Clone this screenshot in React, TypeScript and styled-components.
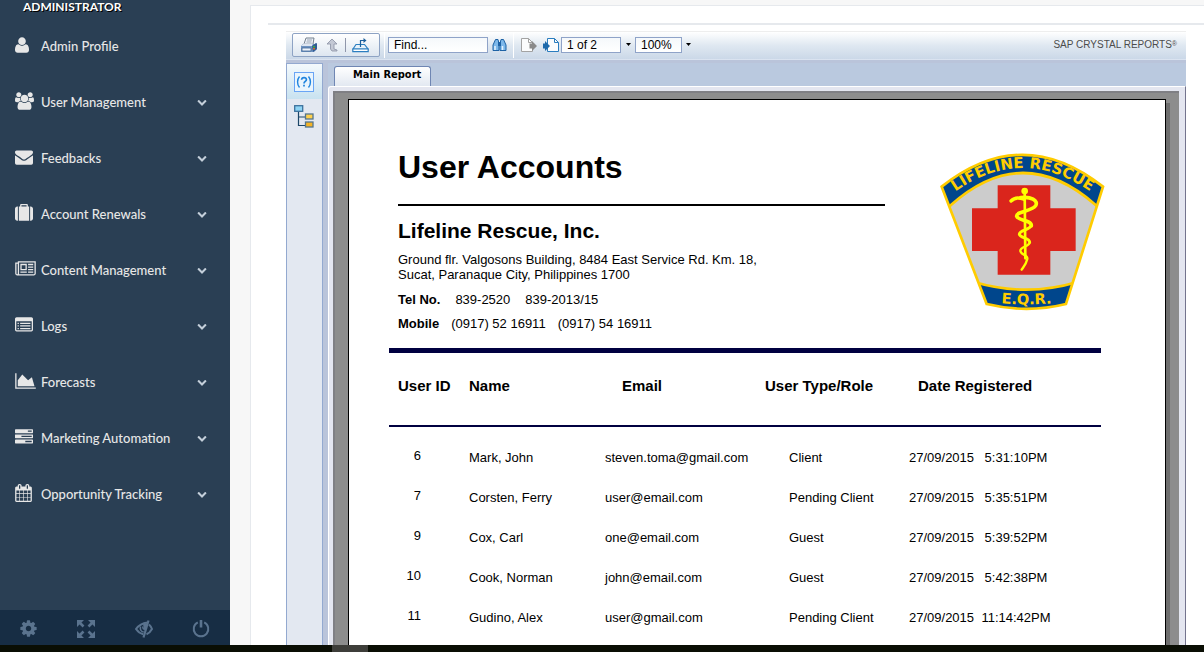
import React from "react";
import styled, { createGlobalStyle, css } from "styled-components";

const Global = createGlobalStyle`
  *, *::before, *::after { box-sizing: border-box; }
  html, body { margin: 0; padding: 0; overflow: hidden; background: #f7f7f7; }
  button, input { font: inherit; margin: 0; }
`;

const arial = `"Liberation Sans", Arial, sans-serif`;
const navy = "#000040";

/* ---------- shell ---------- */

const Shell = styled.div`
  display: flex;
  flex-direction: column;
  height: 100vh;
  overflow: hidden;
`;

const Body = styled.div`
  flex: 1;
  min-height: 0;
  display: flex;
`;

const ScrollTrack = styled.div`
  height: 7px;
  background: #0a0e04;
  padding-left: 332px;
`;

const ScrollThumb = styled.div`
  width: 36px;
  height: 7px;
  background: #3e3e3a;
`;

/* ---------- sidebar ---------- */

const Sidebar = styled.aside`
  flex: 0 0 230px;
  display: flex;
  flex-direction: column;
  background: #2a3f54;
  font-family: Lato, sans-serif;
`;

const Role = styled.h3`
  margin: 0;
  padding-left: 23px;
  height: 18px;
  font-size: 12px;
  line-height: 14px;
  font-weight: 700;
  color: #fff;
  text-shadow: 1px 1px #000;
`;

const Menu = styled.ul`
  flex: 1;
  margin: 0;
  padding: 0;
  list-style: none;
`;

const MenuLink = styled.a`
  display: flex;
  align-items: center;
  height: 56px;
  padding: 0 23px 0 15px;
  color: #e7e7e7;
  font-size: 13px;
  line-height: 20px;
  font-weight: 500;
  text-decoration: none;
`;

const MenuIcon = styled.span`
  flex: 0 0 26px;
  height: 20px;
  svg { display: block; overflow: visible; }
`;

const MenuLabel = styled.span`
  flex: 1;
  white-space: nowrap;
`;

const MenuArrow = styled.span`
  display: flex;
  color: #c4cfda;
`;

const SidebarFooter = styled.div`
  display: grid;
  grid-template-columns: repeat(4, 1fr);
  height: 35px;
  background: #172d44;
`;

const FooterButton = styled.button`
  display: flex;
  align-items: center;
  justify-content: center;
  padding: 2px 0 0;
  border: 0;
  background: none;
  color: #5a738e;
`;

/* ---------- content panel ---------- */

const Content = styled.main`
  flex: 1;
  min-width: 0;
  display: flex;
  padding: 5px 0 0 20px;
  background: #f7f7f7;
`;

const Panel = styled.section`
  flex: 1;
  min-width: 0;
  display: flex;
  flex-direction: column;
  padding: 17px 0 0 17px;
  border: 1px solid #e6e9ed;
  border-width: 1px 0 0 1px;
  background: #fff;
`;

const Divider = styled.hr`
  flex: none;
  width: 100%;
  height: 2px;
  margin: 0 0 6px;
  border: 0;
  background: #e6e9ed;
`;

const Viewer = styled.div`
  flex: 1;
  min-height: 0;
  display: flex;
  flex-direction: column;
  margin: 0 18px;
  background: #bac9df;
  font-family: ${arial};
  color: #000;
`;

const Toolbar = styled.div`
  flex: none;
  display: flex;
  align-items: center;
  height: 29px;
  padding: 0 9px 2px 6px;
  border-top: 1px solid #eee;
  border-bottom: 1px solid #dae3f0;
  background: linear-gradient(#fff, #dfe8f1 50%, #cbd8e8);
`;

const ToolGroup = styled.div`
  display: flex;
  align-items: center;
  width: 88px;
  height: 24px;
  margin-right: 1px;
  padding-left: 6px;
  border: 1px solid #8ea3c4;
  border-radius: 2px;
  background: linear-gradient(#fff, #dde6f0);
`;

const IconButton = styled.button<{ $w?: number }>`
  flex: none;
  display: flex;
  align-items: center;
  justify-content: center;
  width: ${(p) => p.$w ?? 20}px;
  height: 20px;
  padding: 0;
  border: 0;
  background: none;
  svg { display: block; flex: none; }
`;

const Rule = styled.span<{ $dark?: boolean }>`
  flex: none;
  width: 1px;
  height: ${(p) => (p.$dark ? 14 : 26)}px;
  margin: 0 ${(p) => (p.$dark ? 0 : 3)}px;
  background: ${(p) => (p.$dark ? "#8f96aa" : "#fff")};
`;

const Field = styled.input<{ $w: number }>`
  width: ${(p) => p.$w}px;
  height: 16px;
  padding: 0 5px;
  border: 1px solid #8fa3c8;
  border-radius: 0;
  background: linear-gradient(#f5f8fb, #fff);
  font-family: ${arial};
  font-size: 12px;
  line-height: 14px;
  color: #000;
  outline: none;
  &::placeholder { color: #000; opacity: 1; }
`;

const Brand = styled.span`
  margin-left: auto;
  font-size: 10px;
  line-height: 14px;
  color: #4c4c4c;
  white-space: nowrap;
  sup { font-size: 7px; line-height: 7px; vertical-align: 2px; }
`;

const ViewerBody = styled.div`
  flex: 1;
  min-height: 0;
  display: flex;
  border-top: 3px solid #bac4da;
`;

const ToolPanel = styled.nav`
  flex: 0 0 37px;
  display: flex;
  flex-direction: column;
  border: 1px solid #93a9d0;
  border-bottom: 0;
  background: #e3e8f1;
`;

const PanelButton = styled.button<{ $active?: boolean }>`
  display: flex;
  align-items: center;
  justify-content: center;
  height: 35px;
  padding: 0 2px 0 0;
  border: 0;
  background: ${(p) => (p.$active ? "linear-gradient(#f4f9fc, #c8e2f0)" : "none")};
`;

const ReportColumn = styled.div`
  flex: 1;
  min-width: 0;
  display: flex;
  flex-direction: column;
  padding-left: 5px;
  background: linear-gradient(90deg, #bac4da 5px, transparent 5px);
`;

const TabStrip = styled.div`
  flex: none;
  display: flex;
  height: 23px;
  padding: 3px 0 0 6px;
`;

const Tab = styled.button`
  width: 97px;
  height: 20px;
  padding: 0 8px 3px 18px;
  border: 1px solid #6f86b3;
  border-bottom: 0;
  border-radius: 3px 3px 0 0;
  background: linear-gradient(#fff, #e2e8f1);
  font-family: "DejaVu Sans Condensed", "DejaVu Sans", sans-serif;
  font-size: 11px;
  line-height: 14px;
  font-weight: 700;
  text-align: left;
  white-space: nowrap;
`;

const Frame = styled.div`
  flex: 1;
  min-height: 0;
  display: flex;
  padding: 4px 6px 0 4px;
  border: 1px solid #fff;
  border-right-color: #74748e;
  border-bottom: 0;
  border-radius: 3px 0 0 0;
  background: #e4e6f0;
`;

const Desk = styled.div`
  flex: 1;
  min-width: 0;
  padding: 6px 13px 0;
  border: 2px solid #7f7f84;
  border-width: 2px 0 0 2px;
  background: #8d8d8d;
`;

const Paper = styled.article`
  height: 100%;
  padding: 48px 40px 0;
  border: 1px solid #000;
  border-bottom: 0;
  background: #fff;
  box-shadow: 4px 4px 0 #6e6e6e;
`;

/* ---------- report ---------- */

const ReportHead = styled.header`
  display: flex;
  justify-content: space-between;
  max-width: 716px;
  height: 200px;
  padding-left: 9px;
`;

const Letterhead = styled.div`
  flex: 0 1 487px;
`;

const Title = styled.h1`
  margin: 0 0 16px;
  padding-bottom: 18px;
  border-bottom: 2px solid #000;
  font-size: 32px;
  line-height: 38px;
  font-weight: 700;
`;

const Company = styled.h2`
  margin: -4px 0 8px;
  font-size: 21px;
  line-height: 26px;
  font-weight: 700;
`;

const Address = styled.address`
  margin-bottom: 10px;
  font-size: 13px;
  line-height: 15px;
  font-style: normal;
`;

const Contact = styled.p<{ $gap: number }>`
  display: flex;
  margin: 0 0 8px;
  font-size: 13px;
  line-height: 16px;
  gap: ${(p) => p.$gap}px;
`;

const LogoBox = styled.div`
  flex: 0 0 165px;
  padding-top: 5px;
  svg { display: block; }
`;

const Table = styled.table`
  width: 100%;
  max-width: 712px;
  table-layout: fixed;
  border-collapse: collapse;
  font-size: 13px;
  line-height: 16px;
`;

const HeadRow = styled.tr`
  height: 75px;
  border-top: 5px solid ${navy};
  border-bottom: 2px solid ${navy};
`;

const Th = styled.th<{ $indent?: number }>`
  padding: 24px 0 0 ${(p) => p.$indent ?? 0}px;
  font-size: 15px;
  line-height: 18px;
  text-align: left;
  vertical-align: top;
  white-space: nowrap;
`;

const Row = styled.tr`
  height: 40px;
`;

const Td = styled.td<{ $indent?: number; $id?: boolean }>`
  padding: 0 0 0 ${(p) => p.$indent ?? 0}px;
  vertical-align: bottom;
  white-space: nowrap;
  ${(p) =>
    p.$id &&
    css`
      padding: 0 48px 2px 0;
      text-align: right;
    `}
`;

const DatePart = styled.span`
  display: inline-block;
  width: 67px;
`;

const TimePart = styled.span`
  display: inline-block;
  width: 80px;
  text-align: center;
`;

/* ---------- icons ---------- */

function Glyph({ d, x = 0, w = 1792, size = 18 }: { d: string; x?: number; w?: number; size?: number }) {
  const width = Math.round((w * size) / 1792);
  return (
    <svg width={width} height={size} viewBox={`${x} 0 ${w} 1792`} fill="currentColor" aria-hidden="true">
      <path d={d} />
    </svg>
  );
}

const glyphs = {
  user: "M1536 1405q0 120-73 189.5t-194 69.5h-874q-121 0-194-69.5t-73-189.5q0-53 3.5-103.5t14-109 26.5-108.5 43-97.5 62-81 85.5-53.5 111.5-20q9 0 42 21.5t74.5 48 108 48 133.5 21.5 133.5-21.5 108-48 74.5-48 42-21.5q61 0 111.5 20t85.5 53.5 62 81 43 97.5 26.5 108.5 14 109 3.5 103.5zm-320-893q0 159-112.5 271.5t-271.5 112.5-271.5-112.5-112.5-271.5 112.5-271.5 271.5-112.5 271.5 112.5 112.5 271.5z",
  users:
    "M529 896q-162 5-265 128h-134q-82 0-138-40.5t-56-118.5q0-353 124-353 6 0 43.5 21t97.5 42.5 119 21.5q67 0 133-23-5 37-5 66 0 139 81 256zm1071 637q0 120-73 189.5t-194 69.5h-874q-121 0-194-69.5t-73-189.5q0-53 3.5-103.5t14-109 26.5-108.5 43-97.5 62-81 85.5-53.5 111.5-20q10 0 43 21.5t73 48 107 48 135 21.5 135-21.5 107-48 73-48 43-21.5q61 0 111.5 20t85.5 53.5 62 81 43 97.5 26.5 108.5 14 109 3.5 103.5zm-1024-1277q0 106-75 181t-181 75-181-75-75-181 75-181 181-75 181 75 75 181zm704 384q0 159-112.5 271.5t-271.5 112.5-271.5-112.5-112.5-271.5 112.5-271.5 271.5-112.5 271.5 112.5 112.5 271.5zm576 225q0 78-56 118.5t-138 40.5h-134q-103-123-265-128 81-117 81-256 0-29-5-66 66 23 133 23 59 0 119-21.5t97.5-42.5 43.5-21q124 0 124 353zm-128-609q0 106-75 181t-181 75-181-75-75-181 75-181 181-75 181 75 75 181z",
  envelope:
    "M1792 710v794q0 66-47 113t-113 47h-1472q-66 0-113-47t-47-113v-794q44 49 101 87 362 246 497 345 57 42 92.5 65.5t94.5 48 110 24.5h2q51 0 110-24.5t94.5-48 92.5-65.5q170-123 498-345 57-39 100-87zm0-294q0 79-49 151t-122 123q-376 261-468 325-10 7-42.5 31t-54 38.5-52 32.5-57.5 27-50 9h-2q-23 0-50-9t-57.5-27-52-32.5-54-38.5-42.5-31q-91-64-262-182.5t-205-142.5q-62-42-117-115.5t-55-136.5q0-78 41.5-130t118.5-52h1472q65 0 112.5 47t47.5 113z",
  suitcase:
    "M640 256h512v-128h-512v128zm-352 0v1408h-64q-92 0-158-66t-66-158v-960q0-92 66-158t158-66h64zm1120 0v1408h-1024v-1408h128v-160q0-40 28-68t68-28h576q40 0 68 28t28 68v160h128zm384 224v960q0 92-66 158t-158 66h-64v-1408h64q92 0 158 66t66 158z",
  news: "M1024 512h-384v384h384v-384zm128 640v128h-640v-128h640zm0-768v640h-640v-640h640zm640 768v128h-512v-128h512zm0-256v128h-512v-128h512zm0-256v128h-512v-128h512zm0-256v128h-512v-128h512zm-1536 960v-960h-128v960q0 26 19 45t45 19 45-19 19-45zm1664 0v-1088h-1536v1088q0 33-11 64h1483q26 0 45-19t19-45zm128-1216v1216q0 80-56 136t-136 56h-1664q-80 0-136-56t-56-136v-1088h256v-128h1792z",
  list: "M256 672h128v128h-128zM256 928h128v128h-128zM256 1184h128v128h-128zM512 672h1024v128h-1024zM512 928h1024v128h-1024zM512 1184h1024v128h-1024zM1664 1376v-832q0-13-9.5-22.5t-22.5-9.5h-1472q-13 0-22.5 9.5t-9.5 22.5v832q0 13 9.5 22.5t22.5 9.5h1472q13 0 22.5-9.5t9.5-22.5zm128-1088v1088q0 66-47 113t-113 47h-1472q-66 0-113-47t-47-113v-1088q0-66 47-113t113-47h1472q66 0 113 47t47 113z",
  area: "M2048 1536v128h-2048v-1536h128v1408h1920zm-384-1024l256 896h-1664v-576l448-576 576 576z",
  tasks:
    "M1024 1408h640v-128h-640v128zm-384-512h1024v-128h-1024v128zm640-512h384v-128h-384v128zm512 832v256q0 26-19 45t-45 19h-1664q-26 0-45-19t-19-45v-256q0-26 19-45t45-19h1664q26 0 45 19t19 45zm0-512v256q0 26-19 45t-45 19h-1664q-26 0-45-19t-19-45v-256q0-26 19-45t45-19h1664q26 0 45 19t19 45zm0-512v256q0 26-19 45t-45 19h-1664q-26 0-45-19t-19-45v-256q0-26 19-45t45-19h1664q26 0 45 19t19 45z",
  calendar:
    "M192 1664h288v-288h-288v288zm352 0h320v-288h-320v288zm-352-352h288v-320h-288v320zm352 0h320v-320h-320v320zm-352-384h288v-288h-288v288zm736 736h320v-288h-320v288zm-384-736h320v-288h-320v288zm768 736h288v-288h-288v288zm-384-352h320v-320h-320v320zm-352-864v-288q0-13-9.5-22.5t-22.5-9.5h-64q-13 0-22.5 9.5t-9.5 22.5v288q0 13 9.5 22.5t22.5 9.5h64q13 0 22.5-9.5t9.5-22.5zm736 864h288v-320h-288v320zm-384-384h320v-288h-320v288zm384 0h288v-288h-288v288zm32-480v-288q0-13-9.5-22.5t-22.5-9.5h-64q-13 0-22.5 9.5t-9.5 22.5v288q0 13 9.5 22.5t22.5 9.5h64q13 0 22.5-9.5t9.5-22.5zm384-64v1280q0 52-38 90t-90 38h-1408q-52 0-90-38t-38-90v-1280q0-52 38-90t90-38h128v-96q0-66 47-113t113-47h64q66 0 113 47t47 113v96h384v-96q0-66 47-113t113-47h64q66 0 113 47t47 113v96h128q52 0 90 38t38 90z",
  chevron:
    "M1683 808l-742 741q-19 19-45 19t-45-19l-742-741q-19-19-19-45.5t19-45.5l166-165q19-19 45-19t45 19l531 531 531-531q19-19 45-19t45 19l166 165q19 19 19 45.5t-19 45.5z",
  cog: "M1152 896q0-106-75-181t-181-75-181 75-75 181 75 181 181 75 181-75 75-181zm512-109v222q0 12-8 23t-20 13l-185 28q-19 54-39 91 35 50 107 138 10 12 10 25t-9 23q-27 37-99 108t-94 71q-12 0-26-9l-138-108q-44 23-91 38-16 136-29 186-7 28-36 28h-222q-14 0-24.5-8.5t-11.5-21.5l-28-184q-49-16-90-37l-141 107q-10 9-25 9-14 0-25-11-126-114-165-168-7-10-7-23 0-12 8-23 15-21 51-66.5t54-70.5q-27-50-41-99l-183-27q-13-2-21-12.5t-8-23.5v-222q0-12 8-23t19-13l186-28q14-46 39-92-40-57-107-138-10-12-10-24 0-10 9-23 26-36 98.5-107.5t94.5-71.5q13 0 26 10l138 107q44-23 91-38 16-136 29-186 7-28 36-28h222q14 0 24.5 8.5t11.5 21.5l28 184q49 16 90 37l142-107q9-9 24-9 13 0 25 10 129 119 165 170 7 8 7 22 0 12-8 23-15 21-51 66.5t-54 70.5q26 50 41 98l183 28q13 2 21 12.5t8 23.5z",
};

const FullscreenIcon = () => (
  <svg width="18" height="18" viewBox="0 0 18 18" fill="currentColor" stroke="currentColor" strokeWidth="2.6" aria-hidden="true">
    <path stroke="none" d="M0 0h7L0 7zM18 0v7l-7-7zM0 18v-7l7 7zM18 18h-7l7-7z" />
    <path d="M2 2l4.500 4.500M16 2l-4.500 4.500M2 16l4.500-4.500M16 16l-4.500-4.500" />
  </svg>
);

const EyeCloseIcon = () => (
  <svg width="18" height="18" viewBox="0 0 18 18" fill="none" stroke="currentColor" strokeWidth="2" aria-hidden="true">
    <path d="M12.500 2.500C8 3 3.500 5.500 1 9c1.800 2.600 4.200 4.500 7.200 5.200" />
    <path d="M14 4.500c1.300 1.200 2.300 2.700 3 4.500-1.400 2.600-3 4.300-5.500 5.200" />
    <path strokeWidth="2.200" d="M13.500.5L8.500 17.500" />
    <path strokeWidth="1.500" d="M5.500 6.500c-.6 3 .6 5 3.200 5.600M8 6.500c-.4 1.500 0 2.300 1.200 2.700" />
    <path fill="currentColor" stroke="none" d="M8 4.200l4.500-1-2 8-1.500-2z" />
  </svg>
);

const PowerIcon = () => (
  <svg width="18" height="18" viewBox="0 0 18 18" fill="none" stroke="currentColor" strokeWidth="2" aria-hidden="true">
    <path d="M5.800 2.400a7.300 7.300 0 1 0 6.400 0" />
    <path strokeWidth="2.600" d="M9 0v7.500" />
  </svg>
);

const PrintIcon = () => (
  <svg width="18" height="16" viewBox="0 0 18 16" aria-hidden="true">
    <path d="M6 1h8l-1 6H4z" fill="#eef2f8" stroke="#75818f" />
    <path d="M7 3h5M6.500 5h5" stroke="#9aa5b4" />
    <path d="M3 7h12l2-1v6l-3 3H1V9z" fill="#6f93c0" />
    <path d="M1 9l3-2.500h9L12 9z" fill="#dfe6f0" />
    <path d="M2 11h9v3H2z" fill="#eef4fa" stroke="#3f6496" strokeWidth=".8" />
    <path d="M12 9l4-3 1 1v5l-4 3z" fill="#315b93" />
    <path d="M13 9h2v1.500h-2z" fill="#3fae3c" />
    <path d="M13 11h2v1.500h-2z" fill="#d9642b" />
  </svg>
);

const ParentIcon = () => (
  <svg width="12" height="14" viewBox="0 0 12 14" aria-hidden="true">
    <path d="M6 1l5 5H8v5l3 1v1H6L4.500 11V6H1z" fill="#c3c8d4" stroke="#9298aa" strokeWidth=".9" />
  </svg>
);

const ExportIcon = () => (
  <svg width="17" height="16" viewBox="0 0 17 16" fill="none" stroke="#2c7ec0" strokeWidth="1.200" aria-hidden="true">
    <path d="M4 7.500h8.500l3.500 4.500H1z" fill="#e8f3fb" />
    <path d="M.8 12h15.400v2.600H.8z" fill="#fff" />
    <path d="M8.500 10V3.500h3.500" stroke="#1b5f9c" />
    <path d="M11.500 1L14.500 3.500l-3 2.500z" fill="#1b5f9c" stroke="none" />
  </svg>
);

const BinocularsIcon = () => (
  <svg width="15" height="14" viewBox="0 0 15 14" aria-hidden="true">
    <path d="M3.500 1.500h2.500l1 4v7H1V7z" fill="#7db8ea" stroke="#1d62a5" />
    <path d="M11.500 1.500H9l-1 4v7h6V7z" fill="#7db8ea" stroke="#1d62a5" />
    <path d="M6 4h3v4H6z" fill="#1d62a5" />
    <path d="M3 8v4M10.500 8v4" stroke="#e6f4ff" strokeWidth="1.500" />
  </svg>
);

const PageIcon = ({ next }: { next?: boolean }) => {
  const stroke = next ? "#2a7dbf" : "#a3a3a3";
  const arrow = next ? "#1d69ab" : "#8a8a8a";
  return (
    <svg width="17" height="14" viewBox="0 0 17 14" aria-hidden="true">
      <path d={next ? "M4.500 .5h7l4 4V13.500H4.500z" : "M.5 .5h7l4 4V13.500H.5z"} fill="#fbfcfd" stroke={stroke} />
      <path d={next ? "M11.500 .5v4h4" : "M7.500 .5v4h4"} fill="none" stroke={stroke} />
      {next ? (
        <path d="M0 5.500h2V3l5 5-5 5v-2.500H0z" fill={arrow} />
      ) : (
        <path d="M8.500 5.500H11V3l5 5-5 5v-2.500H8.500z" fill={arrow} />
      )}
    </svg>
  );
};

const CaretIcon = () => (
  <svg width="5" height="3" viewBox="0 0 5 3" aria-hidden="true">
    <path d="M0 0h5L2.500 3z" fill="#000" />
  </svg>
);

const ParamIcon = () => (
  <svg width="20" height="20" viewBox="0 0 20 20" fill="none" stroke="#1f84de" strokeWidth="1.400" aria-hidden="true">
    <rect x=".5" y=".5" width="19" height="19" fill="#e9f5fd" stroke="#6aa5f5" strokeWidth="1" />
    <path d="M5.500 4.500c-2.600 3-2.600 8 0 11M14.500 4.500c2.600 3 2.600 8 0 11" />
    <path strokeWidth="1.700" d="M7.600 7.800c.2-3 5-2.800 4.800 0-.2 1.700-2.400 1.700-2.400 3.700M10 12.800v1.700" />
  </svg>
);

const TreeIcon = () => (
  <svg width="20" height="23" viewBox="0 0 20 23" fill="none" aria-hidden="true">
    <path d="M4.500 6v14.500h7M4.500 12h7" stroke="#1d4668" strokeWidth="1.200" />
    <rect x=".7" y=".7" width="8" height="5.600" fill="#8fd4f4" stroke="#3c719c" strokeWidth="1.300" />
    <rect x="11.500" y="9" width="7.500" height="5" fill="#ffd04d" stroke="#55758c" strokeWidth="1.300" />
    <rect x="11.500" y="17" width="7.500" height="5" fill="#f5b324" stroke="#55758c" strokeWidth="1.300" />
  </svg>
);

const BadgeLogo = () => (
  <svg width="165" height="158" viewBox="28 24 495 474" role="img" aria-label="Lifeline Rescue E.Q.R.">
    <defs>
      <path id="rescue-arc" d="M54 154Q275 -16 498 154" />
      <path id="eqr-arc" d="M170 470Q288 486 405 470" />
      <clipPath id="badge-shape">
        <path d="M33 125Q275 -66 517 125L406 477Q288 506 168 477Z" />
      </clipPath>
    </defs>
    <path d="M33 125Q275 -66 517 125L406 477Q288 506 168 477Z" fill="#ccc" />
    <g clipPath="url(#badge-shape)" stroke="#fc0" strokeWidth="8">
      <path d="M0 0H560V240L494 179Q275 -12 60 181L0 240Z" fill="#00468c" />
      <path d="M130 411Q288 457 440 411V520H130Z" fill="#00468c" />
    </g>
    <path d="M33 125Q275 -66 517 125L406 477Q288 506 168 477Z" fill="none" stroke="#fc0" strokeWidth="8" />
    <path d="M201 121H359V190H435V318H359V389H201V318H124V190H201Z" fill="#da251c" />
    <g fill="none" stroke="#ff0" strokeLinecap="round">
      <path d="M282 140L284 340" strokeWidth="8" />
      <path d="M241 168C252 156 268 158 280 163" strokeWidth="10" />
      <path d="M270 158C300 154 324 166 315 182C304 200 256 198 258 214C262 228 302 224 302 242" strokeWidth="11" />
      <path d="M302 240C300 256 266 254 266 268C268 280 297 278 297 292" strokeWidth="9" />
      <path d="M297 292C296 306 268 304 269 318C272 332 292 328 290 342C287 356 280 364 273 374" strokeWidth="7" />
    </g>
    <circle cx="282" cy="138" r="10" fill="#ff0" />
    <g fill="#fc0" fontFamily="'DejaVu Sans', sans-serif" fontWeight="700" textAnchor="middle">
      <text fontSize="45">
        <textPath href="#rescue-arc" startOffset="50%">LIFELINE RESCUE</textPath>
      </text>
      <text fontSize="44">
        <textPath href="#eqr-arc" startOffset="50%">E.Q.R.</textPath>
      </text>
    </g>
  </svg>
);

/* ---------- data ---------- */

const menu = [
  { label: "Admin Profile", icon: <Glyph d={glyphs.user} x={128} w={1408} />, open: false },
  { label: "User Management", icon: <Glyph d={glyphs.users} x={-64} w={1920} />, open: true },
  { label: "Feedbacks", icon: <Glyph d={glyphs.envelope} />, open: true },
  { label: "Account Renewals", icon: <Glyph d={glyphs.suitcase} />, open: true },
  { label: "Content Management", icon: <Glyph d={glyphs.news} w={2048} />, open: true },
  { label: "Logs", icon: <Glyph d={glyphs.list} />, open: true },
  { label: "Forecasts", icon: <Glyph d={glyphs.area} w={2048} />, open: true },
  { label: "Marketing Automation", icon: <Glyph d={glyphs.tasks} />, open: true },
  { label: "Opportunity Tracking", icon: <Glyph d={glyphs.calendar} x={64} w={1664} />, open: true },
];

const accounts = [
  ["6", "Mark, John", "steven.toma@gmail.com", "Client", "27/09/2015", "5:31:10PM"],
  ["7", "Corsten, Ferry", "user@email.com", "Pending Client", "27/09/2015", "5:35:51PM"],
  ["9", "Cox, Carl", "one@email.com", "Guest", "27/09/2015", "5:39:52PM"],
  ["10", "Cook, Norman", "john@email.com", "Guest", "27/09/2015", "5:42:38PM"],
  ["11", "Gudino, Alex", "user@gmail.com", "Pending Client", "27/09/2015", "11:14:42PM"],
];

export default function App() {
  return (
    <>
      <Global />
      <Shell>
        <Body>
          <Sidebar>
            <Role>ADMINISTRATOR</Role>
            <Menu>
              {menu.map((m) => (
                <li key={m.label}>
                  <MenuLink href="#">
                    <MenuIcon>{m.icon}</MenuIcon>
                    <MenuLabel>{m.label}</MenuLabel>
                    {m.open && (
                      <MenuArrow>
                        <Glyph d={glyphs.chevron} size={10} />
                      </MenuArrow>
                    )}
                  </MenuLink>
                </li>
              ))}
            </Menu>
            <SidebarFooter>
              <FooterButton aria-label="Settings"><Glyph d={glyphs.cog} size={19} /></FooterButton>
              <FooterButton aria-label="Full screen"><FullscreenIcon /></FooterButton>
              <FooterButton aria-label="Lock"><EyeCloseIcon /></FooterButton>
              <FooterButton aria-label="Log out"><PowerIcon /></FooterButton>
            </SidebarFooter>
          </Sidebar>

          <Content>
            <Panel>
              <Divider />
              <Viewer>
                <Toolbar>
                  <ToolGroup>
                    <IconButton aria-label="Print"><PrintIcon /></IconButton>
                    <IconButton $w={26} aria-label="Parent view"><ParentIcon /></IconButton>
                    <Rule $dark />
                    <IconButton $w={28} aria-label="Export"><ExportIcon /></IconButton>
                  </ToolGroup>
                  <Rule />
                  <Field $w={100} type="text" placeholder="Find..." aria-label="Find" />
                  <IconButton $w={22} aria-label="Search"><BinocularsIcon /></IconButton>
                  <Rule />
                  <IconButton $w={24} aria-label="Previous page"><PageIcon /></IconButton>
                  <IconButton $w={20} aria-label="Next page"><PageIcon next /></IconButton>
                  <Field $w={60} type="text" defaultValue="1 of 2" aria-label="Page" />
                  <IconButton $w={14} aria-label="Choose page"><CaretIcon /></IconButton>
                  <Field $w={47} type="text" defaultValue="100%" aria-label="Zoom" />
                  <IconButton $w={12} aria-label="Choose zoom"><CaretIcon /></IconButton>
                  <Brand>SAP CRYSTAL REPORTS<sup>®</sup></Brand>
                </Toolbar>
                <ViewerBody>
                  <ToolPanel>
                    <PanelButton $active aria-label="Parameters"><ParamIcon /></PanelButton>
                    <PanelButton aria-label="Group tree"><TreeIcon /></PanelButton>
                  </ToolPanel>
                  <ReportColumn>
                    <TabStrip>
                      <Tab>Main Report</Tab>
                    </TabStrip>
                    <Frame>
                      <Desk>
                        <Paper>
                          <ReportHead>
                            <Letterhead>
                              <Title>User Accounts</Title>
                              <Company>Lifeline Rescue, Inc.</Company>
                              <Address>
                                Ground flr. Valgosons Building, 8484 East Service Rd. Km. 18,
                                <br />
                                Sucat, Paranaque City, Philippines 1700
                              </Address>
                              <Contact $gap={15}>
                                <b>Tel No.</b>
                                <span>839-2520</span>
                                <span>839-2013/15</span>
                              </Contact>
                              <Contact $gap={12}>
                                <b>Mobile</b>
                                <span>(0917) 52 16911</span>
                                <span>(0917) 54 16911</span>
                              </Contact>
                            </Letterhead>
                            <LogoBox><BadgeLogo /></LogoBox>
                          </ReportHead>
                          <Table>
                            <colgroup>
                              <col width="80" />
                              <col width="136" />
                              <col width="160" />
                              <col width="144" />
                              <col width="192" />
                            </colgroup>
                            <thead>
                              <HeadRow>
                                <Th $indent={9}>User ID</Th>
                                <Th>Name</Th>
                                <Th $indent={17}>Email</Th>
                                <Th>User Type/Role</Th>
                                <Th $indent={9}>Date Registered</Th>
                              </HeadRow>
                            </thead>
                            <tbody>
                              {accounts.map(([id, name, email, role, date, time]) => (
                                <Row key={id}>
                                  <Td $id>{id}</Td>
                                  <Td>{name}</Td>
                                  <Td>{email}</Td>
                                  <Td $indent={24}>{role}</Td>
                                  <Td>
                                    <DatePart>{date}</DatePart>
                                    <TimePart>{time}</TimePart>
                                  </Td>
                                </Row>
                              ))}
                            </tbody>
                          </Table>
                        </Paper>
                      </Desk>
                    </Frame>
                  </ReportColumn>
                </ViewerBody>
              </Viewer>
            </Panel>
          </Content>
        </Body>
        <ScrollTrack>
          <ScrollThumb />
        </ScrollTrack>
      </Shell>
    </>
  );
}
